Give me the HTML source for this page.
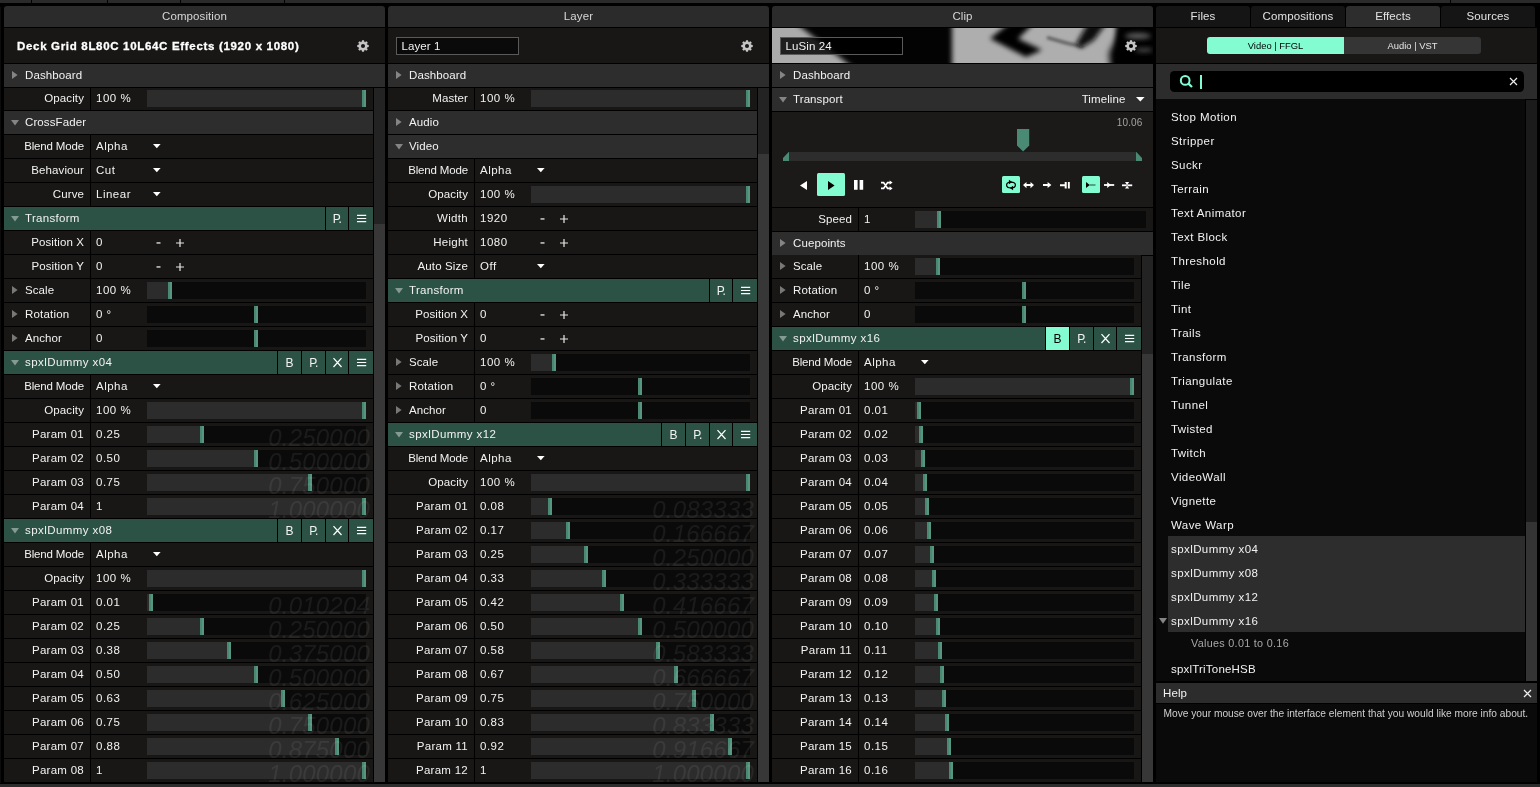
<!DOCTYPE html>
<html><head><meta charset="utf-8"><title>UI</title><style>
*{box-sizing:border-box;margin:0;padding:0}
html,body{width:1540px;height:787px;overflow:hidden;background:#000}
body{position:relative;font-family:"Liberation Sans",sans-serif;font-size:11.5px;color:#f2f2f2;letter-spacing:.1px}
.a,.r,.r>*,.p>*,.bt>*{position:absolute}
.p{position:absolute;top:0;height:787px;width:381px;will-change:transform}
.hd{left:0;top:6px;width:381px;height:21px;background:#2b2b2b;border-radius:3px 3px 0 0;text-align:center;line-height:20px;color:#d6d6d6}
.tt{left:0;top:28px;width:381px;height:35px;background:#181715}
.r{left:0;height:23px;line-height:22px;background:#181715;overflow:hidden;white-space:nowrap}
.s{background:#2d2d2d}
.t{background:#2b5245}
.lb{left:0;top:0;width:80px;text-align:right}
.ll{left:21px;top:0}
.sp{left:86px;top:0;width:1px;height:23px;background:#000}
.v{left:92px;top:0;letter-spacing:.5px}
.sl{left:143px;top:3px;height:17px;background:#0a0a0a}
.sl i{position:absolute;left:0;top:0;height:17px;background:#2c2c2c}
.sl b{position:absolute;top:0;width:4px;height:17px;background:linear-gradient(90deg,#4a8872 0,#4a8872 50%,#569680 50%)}
.g{right:3px;top:1px;font-style:italic;font-size:24px;line-height:28px;color:rgba(255,255,255,.07);letter-spacing:.2px}
.bt{top:0;height:23px;background:#2b5245;text-align:center;font-size:12px;line-height:24px}
.on{background:#83fcd2;color:#000}
svg{position:absolute;overflow:visible}
.sb{background:#232323}
.th{background:#373737}
.li{left:15px;height:24px;line-height:23px;white-space:nowrap;letter-spacing:.42px}
</style></head><body>
<div class="a" style="left:0;top:0;width:1540px;height:3px;background:#2a2a2a"></div>
<div class="a" style="left:31px;top:0;width:1px;height:3px;background:#000"></div>
<div class="a" style="left:107px;top:0;width:1px;height:3px;background:#000"></div>
<div class="a" style="left:180px;top:0;width:1px;height:3px;background:#000"></div>
<div class="a" style="left:284px;top:0;width:1px;height:3px;background:#000"></div>
<div class="a" style="left:1450px;top:0;width:1px;height:3px;background:#000"></div>
<div class="a" style="left:0;top:784px;width:1540px;height:3px;background:#2d2d2d"></div>
<div class="a" style="left:0;top:7px;width:1px;height:776px;background:#0c0c0c"></div>
<div class="p" style="left:4px"><div class="hd">Composition</div>
<div class="tt"><span class="a" style="left:13px;top:0;line-height:36.5px;font-weight:bold;letter-spacing:.68px;-webkit-text-stroke:.3px #fff;white-space:nowrap;color:#fff">Deck Grid 8L80C 10L64C Effects (1920 x 1080)</span><svg style="left:353.1px;top:12.4px" width="12" height="12" viewBox="-6 -6 12 12"><g fill="#c6c6c6"><path d="M-1.5 -3.9L-.95 -5.75H.95L1.5 -3.9Z" transform="rotate(0)"/><path d="M-1.5 -3.9L-.95 -5.75H.95L1.5 -3.9Z" transform="rotate(45)"/><path d="M-1.5 -3.9L-.95 -5.75H.95L1.5 -3.9Z" transform="rotate(90)"/><path d="M-1.5 -3.9L-.95 -5.75H.95L1.5 -3.9Z" transform="rotate(135)"/><path d="M-1.5 -3.9L-.95 -5.75H.95L1.5 -3.9Z" transform="rotate(180)"/><path d="M-1.5 -3.9L-.95 -5.75H.95L1.5 -3.9Z" transform="rotate(225)"/><path d="M-1.5 -3.9L-.95 -5.75H.95L1.5 -3.9Z" transform="rotate(270)"/><path d="M-1.5 -3.9L-.95 -5.75H.95L1.5 -3.9Z" transform="rotate(315)"/></g><circle r="3.2" fill="none" stroke="#c6c6c6" stroke-width="2.3"/></svg></div>
<div class="r s" style="top:64px;width:381px"><svg style="left:8px;top:6.9px" width="6" height="8"><path d="M0 0L5.6 4L0 8Z" fill="rgba(255,255,255,.42)"/></svg><span class="ll">Dashboard</span></div>
<div class="r " style="top:87px;width:369px"><span class="lb">Opacity</span><span class="sp"></span><span class="v">100 %</span><div class="sl" style="width:219px"><i style="width:215px"></i><b style="left:215px"></b></div></div>
<div class="a" style="left:0;top:87px;width:381px;height:1px;background:#000"></div>
<div class="r s" style="top:111px;width:369px"><svg style="left:7px;top:9px" width="8" height="5.5"><path d="M0 0H8L4.0 5.5Z" fill="rgba(255,255,255,.42)"/></svg><span class="ll">CrossFader</span></div>
<div class="r " style="top:135px;width:369px"><span class="lb" style="letter-spacing:-0.15px">Blend Mode</span><span class="sp"></span><span class="v">Alpha</span><svg style="left:148.5px;top:9px" width="7.6" height="4.3"><path d="M0 0H7.6L3.8 4.3Z" fill="#fff"/></svg></div>
<div class="r " style="top:159px;width:369px"><span class="lb">Behaviour</span><span class="sp"></span><span class="v">Cut</span><svg style="left:148.5px;top:9px" width="7.6" height="4.3"><path d="M0 0H7.6L3.8 4.3Z" fill="#fff"/></svg></div>
<div class="r " style="top:183px;width:369px"><span class="lb">Curve</span><span class="sp"></span><span class="v">Linear</span><svg style="left:148.5px;top:9px" width="7.6" height="4.3"><path d="M0 0H7.6L3.8 4.3Z" fill="#fff"/></svg></div>
<div class="r" style="top:207px;width:369px;background:#000"><div class="bt" style="left:0;width:321px;text-align:left"><svg style="left:7px;top:9px" width="8" height="5.5"><path d="M0 0H8L4.0 5.5Z" fill="rgba(255,255,255,.42)"/></svg><span class="ll" style="font-size:11.5px;line-height:22px;letter-spacing:0.3px">Transform</span></div><div class="bt" style="left:322px;width:22px"><span style="left:6.8px;top:0;letter-spacing:-.7px;line-height:24px">P.</span></div><div class="bt" style="left:345px;width:24px"><svg style="left:7.5px;top:7px" width="9" height="9"><path d="M0 1.3H9.2M0 4.5H9.2M0 7.6H9.2" stroke="#fff" stroke-width="1.15" fill="none"/></svg></div></div>
<div class="r " style="top:231px;width:369px"><span class="lb">Position X</span><span class="sp"></span><span class="v">0</span><svg style="left:152px;top:11px" width="5" height="2"><rect width="4" height="1.3" x=".5" y=".3" fill="#e8e8e8"/></svg><svg style="left:172px;top:8px" width="8" height="8"><path d="M0 4H8M4 0V8" stroke="#e8e8e8" stroke-width="1.2" fill="none"/></svg></div>
<div class="r " style="top:255px;width:369px"><span class="lb">Position Y</span><span class="sp"></span><span class="v">0</span><svg style="left:152px;top:11px" width="5" height="2"><rect width="4" height="1.3" x=".5" y=".3" fill="#e8e8e8"/></svg><svg style="left:172px;top:8px" width="8" height="8"><path d="M0 4H8M4 0V8" stroke="#e8e8e8" stroke-width="1.2" fill="none"/></svg></div>
<div class="r " style="top:279px;width:369px"><svg style="left:8px;top:6.9px" width="6" height="8"><path d="M0 0L5.6 4L0 8Z" fill="rgba(255,255,255,.42)"/></svg><span class="ll">Scale</span><span class="sp"></span><span class="v">100 %</span><div class="sl" style="width:219px"><i style="width:21px"></i><b style="left:21px"></b></div></div>
<div class="r " style="top:303px;width:369px"><svg style="left:8px;top:6.9px" width="6" height="8"><path d="M0 0L5.6 4L0 8Z" fill="rgba(255,255,255,.42)"/></svg><span class="ll" style="letter-spacing:0.2px">Rotation</span><span class="sp"></span><span class="v">0 °</span><div class="sl" style="width:219px"><b style="left:107px"></b></div></div>
<div class="r " style="top:327px;width:369px"><svg style="left:8px;top:6.9px" width="6" height="8"><path d="M0 0L5.6 4L0 8Z" fill="rgba(255,255,255,.42)"/></svg><span class="ll">Anchor</span><span class="sp"></span><span class="v">0</span><div class="sl" style="width:219px"><b style="left:107px"></b></div></div>
<div class="r" style="top:351px;width:369px;background:#000"><div class="bt" style="left:0;width:273px;text-align:left"><svg style="left:7px;top:9px" width="8" height="5.5"><path d="M0 0H8L4.0 5.5Z" fill="rgba(255,255,255,.42)"/></svg><span class="ll" style="font-size:11.5px;line-height:22px;letter-spacing:0.43px">spxlDummy x04</span></div><div class="bt" style="left:274px;width:23px">B</div><div class="bt" style="left:298px;width:23px"><span style="left:7.3px;top:0;letter-spacing:-.7px;line-height:24px">P.</span></div><div class="bt" style="left:322px;width:22px"><svg style="left:6.8px;top:7px" width="9" height="9"><path d="M.5 .1L8.5 9M8.5 .1L.5 9" stroke="#fff" stroke-width="1.25" fill="none"/></svg></div><div class="bt" style="left:345px;width:24px"><svg style="left:7.5px;top:7px" width="9" height="9"><path d="M0 1.3H9.2M0 4.5H9.2M0 7.6H9.2" stroke="#fff" stroke-width="1.15" fill="none"/></svg></div></div>
<div class="r " style="top:375px;width:369px"><span class="lb" style="letter-spacing:-0.15px">Blend Mode</span><span class="sp"></span><span class="v">Alpha</span><svg style="left:148.5px;top:9px" width="7.6" height="4.3"><path d="M0 0H7.6L3.8 4.3Z" fill="#fff"/></svg></div>
<div class="r " style="top:399px;width:369px"><span class="lb">Opacity</span><span class="sp"></span><span class="v">100 %</span><div class="sl" style="width:219px"><i style="width:215px"></i><b style="left:215px"></b></div></div>
<div class="r " style="top:423px;width:369px"><span class="lb" style="letter-spacing:0.27px">Param 01</span><span class="sp"></span><span class="v">0.25</span><div class="sl" style="width:219px"><i style="width:53px"></i><b style="left:53px"></b></div><span class="g">0.250000</span></div>
<div class="r " style="top:447px;width:369px"><span class="lb" style="letter-spacing:0.27px">Param 02</span><span class="sp"></span><span class="v">0.50</span><div class="sl" style="width:219px"><i style="width:107px"></i><b style="left:107px"></b></div><span class="g">0.500000</span></div>
<div class="r " style="top:471px;width:369px"><span class="lb" style="letter-spacing:0.27px">Param 03</span><span class="sp"></span><span class="v">0.75</span><div class="sl" style="width:219px"><i style="width:161px"></i><b style="left:161px"></b></div><span class="g">0.750000</span></div>
<div class="r " style="top:495px;width:369px"><span class="lb" style="letter-spacing:0.27px">Param 04</span><span class="sp"></span><span class="v">1</span><div class="sl" style="width:219px"><i style="width:215px"></i><b style="left:215px"></b></div><span class="g">1.000000</span></div>
<div class="r" style="top:519px;width:369px;background:#000"><div class="bt" style="left:0;width:273px;text-align:left"><svg style="left:7px;top:9px" width="8" height="5.5"><path d="M0 0H8L4.0 5.5Z" fill="rgba(255,255,255,.42)"/></svg><span class="ll" style="font-size:11.5px;line-height:22px;letter-spacing:0.43px">spxlDummy x08</span></div><div class="bt" style="left:274px;width:23px">B</div><div class="bt" style="left:298px;width:23px"><span style="left:7.3px;top:0;letter-spacing:-.7px;line-height:24px">P.</span></div><div class="bt" style="left:322px;width:22px"><svg style="left:6.8px;top:7px" width="9" height="9"><path d="M.5 .1L8.5 9M8.5 .1L.5 9" stroke="#fff" stroke-width="1.25" fill="none"/></svg></div><div class="bt" style="left:345px;width:24px"><svg style="left:7.5px;top:7px" width="9" height="9"><path d="M0 1.3H9.2M0 4.5H9.2M0 7.6H9.2" stroke="#fff" stroke-width="1.15" fill="none"/></svg></div></div>
<div class="r " style="top:543px;width:369px"><span class="lb" style="letter-spacing:-0.15px">Blend Mode</span><span class="sp"></span><span class="v">Alpha</span><svg style="left:148.5px;top:9px" width="7.6" height="4.3"><path d="M0 0H7.6L3.8 4.3Z" fill="#fff"/></svg></div>
<div class="r " style="top:567px;width:369px"><span class="lb">Opacity</span><span class="sp"></span><span class="v">100 %</span><div class="sl" style="width:219px"><i style="width:215px"></i><b style="left:215px"></b></div></div>
<div class="r " style="top:591px;width:369px"><span class="lb" style="letter-spacing:0.27px">Param 01</span><span class="sp"></span><span class="v">0.01</span><div class="sl" style="width:219px"><i style="width:2px"></i><b style="left:2px"></b></div><span class="g">0.010204</span></div>
<div class="r " style="top:615px;width:369px"><span class="lb" style="letter-spacing:0.27px">Param 02</span><span class="sp"></span><span class="v">0.25</span><div class="sl" style="width:219px"><i style="width:53px"></i><b style="left:53px"></b></div><span class="g">0.250000</span></div>
<div class="r " style="top:639px;width:369px"><span class="lb" style="letter-spacing:0.27px">Param 03</span><span class="sp"></span><span class="v">0.38</span><div class="sl" style="width:219px"><i style="width:80px"></i><b style="left:80px"></b></div><span class="g">0.375000</span></div>
<div class="r " style="top:663px;width:369px"><span class="lb" style="letter-spacing:0.27px">Param 04</span><span class="sp"></span><span class="v">0.50</span><div class="sl" style="width:219px"><i style="width:107px"></i><b style="left:107px"></b></div><span class="g">0.500000</span></div>
<div class="r " style="top:687px;width:369px"><span class="lb" style="letter-spacing:0.27px">Param 05</span><span class="sp"></span><span class="v">0.63</span><div class="sl" style="width:219px"><i style="width:134px"></i><b style="left:134px"></b></div><span class="g">0.625000</span></div>
<div class="r " style="top:711px;width:369px"><span class="lb" style="letter-spacing:0.27px">Param 06</span><span class="sp"></span><span class="v">0.75</span><div class="sl" style="width:219px"><i style="width:161px"></i><b style="left:161px"></b></div><span class="g">0.750000</span></div>
<div class="r " style="top:735px;width:369px"><span class="lb" style="letter-spacing:0.27px">Param 07</span><span class="sp"></span><span class="v">0.88</span><div class="sl" style="width:219px"><i style="width:188px"></i><b style="left:188px"></b></div><span class="g">0.875000</span></div>
<div class="r " style="top:759px;width:369px"><span class="lb" style="letter-spacing:0.27px">Param 08</span><span class="sp"></span><span class="v">1</span><div class="sl" style="width:219px"><i style="width:215px"></i><b style="left:215px"></b></div><span class="g">1.000000</span></div>
<div class="a sb" style="left:370px;top:88px;width:11px;height:694px"></div><div class="a th" style="left:370px;top:224px;width:11px;height:558px"></div></div>
<div class="p" style="left:388px"><div class="hd">Layer</div>
<div class="tt"><div class="a" style="left:8px;top:9px;width:123px;height:18px;border:1px solid #5a5a5a;background:#0a0a0a;line-height:17px;padding-left:4.5px;white-space:nowrap">Layer 1</div><svg style="left:353.1px;top:12.4px" width="12" height="12" viewBox="-6 -6 12 12"><g fill="#c6c6c6"><path d="M-1.5 -3.9L-.95 -5.75H.95L1.5 -3.9Z" transform="rotate(0)"/><path d="M-1.5 -3.9L-.95 -5.75H.95L1.5 -3.9Z" transform="rotate(45)"/><path d="M-1.5 -3.9L-.95 -5.75H.95L1.5 -3.9Z" transform="rotate(90)"/><path d="M-1.5 -3.9L-.95 -5.75H.95L1.5 -3.9Z" transform="rotate(135)"/><path d="M-1.5 -3.9L-.95 -5.75H.95L1.5 -3.9Z" transform="rotate(180)"/><path d="M-1.5 -3.9L-.95 -5.75H.95L1.5 -3.9Z" transform="rotate(225)"/><path d="M-1.5 -3.9L-.95 -5.75H.95L1.5 -3.9Z" transform="rotate(270)"/><path d="M-1.5 -3.9L-.95 -5.75H.95L1.5 -3.9Z" transform="rotate(315)"/></g><circle r="3.2" fill="none" stroke="#c6c6c6" stroke-width="2.3"/></svg></div>
<div class="r s" style="top:64px;width:381px"><svg style="left:8px;top:6.9px" width="6" height="8"><path d="M0 0L5.6 4L0 8Z" fill="rgba(255,255,255,.42)"/></svg><span class="ll">Dashboard</span></div>
<div class="r " style="top:87px;width:369px"><span class="lb">Master</span><span class="sp"></span><span class="v">100 %</span><div class="sl" style="width:219px"><i style="width:215px"></i><b style="left:215px"></b></div></div>
<div class="a" style="left:0;top:87px;width:381px;height:1px;background:#000"></div>
<div class="r s" style="top:111px;width:369px"><svg style="left:8px;top:6.9px" width="6" height="8"><path d="M0 0L5.6 4L0 8Z" fill="rgba(255,255,255,.42)"/></svg><span class="ll">Audio</span></div>
<div class="r s" style="top:135px;width:369px"><svg style="left:7px;top:9px" width="8" height="5.5"><path d="M0 0H8L4.0 5.5Z" fill="rgba(255,255,255,.42)"/></svg><span class="ll">Video</span></div>
<div class="r " style="top:159px;width:369px"><span class="lb" style="letter-spacing:-0.15px">Blend Mode</span><span class="sp"></span><span class="v">Alpha</span><svg style="left:148.5px;top:9px" width="7.6" height="4.3"><path d="M0 0H7.6L3.8 4.3Z" fill="#fff"/></svg></div>
<div class="r " style="top:183px;width:369px"><span class="lb">Opacity</span><span class="sp"></span><span class="v">100 %</span><div class="sl" style="width:219px"><i style="width:215px"></i><b style="left:215px"></b></div></div>
<div class="r " style="top:207px;width:369px"><span class="lb" style="letter-spacing:0.3px">Width</span><span class="sp"></span><span class="v">1920</span><svg style="left:152px;top:11px" width="5" height="2"><rect width="4" height="1.3" x=".5" y=".3" fill="#e8e8e8"/></svg><svg style="left:172px;top:8px" width="8" height="8"><path d="M0 4H8M4 0V8" stroke="#e8e8e8" stroke-width="1.2" fill="none"/></svg></div>
<div class="r " style="top:231px;width:369px"><span class="lb" style="letter-spacing:0.25px">Height</span><span class="sp"></span><span class="v">1080</span><svg style="left:152px;top:11px" width="5" height="2"><rect width="4" height="1.3" x=".5" y=".3" fill="#e8e8e8"/></svg><svg style="left:172px;top:8px" width="8" height="8"><path d="M0 4H8M4 0V8" stroke="#e8e8e8" stroke-width="1.2" fill="none"/></svg></div>
<div class="r " style="top:255px;width:369px"><span class="lb" style="letter-spacing:0.15px">Auto Size</span><span class="sp"></span><span class="v">Off</span><svg style="left:148.5px;top:9px" width="7.6" height="4.3"><path d="M0 0H7.6L3.8 4.3Z" fill="#fff"/></svg></div>
<div class="r" style="top:279px;width:369px;background:#000"><div class="bt" style="left:0;width:321px;text-align:left"><svg style="left:7px;top:9px" width="8" height="5.5"><path d="M0 0H8L4.0 5.5Z" fill="rgba(255,255,255,.42)"/></svg><span class="ll" style="font-size:11.5px;line-height:22px;letter-spacing:0.3px">Transform</span></div><div class="bt" style="left:322px;width:22px"><span style="left:6.8px;top:0;letter-spacing:-.7px;line-height:24px">P.</span></div><div class="bt" style="left:345px;width:24px"><svg style="left:7.5px;top:7px" width="9" height="9"><path d="M0 1.3H9.2M0 4.5H9.2M0 7.6H9.2" stroke="#fff" stroke-width="1.15" fill="none"/></svg></div></div>
<div class="r " style="top:303px;width:369px"><span class="lb">Position X</span><span class="sp"></span><span class="v">0</span><svg style="left:152px;top:11px" width="5" height="2"><rect width="4" height="1.3" x=".5" y=".3" fill="#e8e8e8"/></svg><svg style="left:172px;top:8px" width="8" height="8"><path d="M0 4H8M4 0V8" stroke="#e8e8e8" stroke-width="1.2" fill="none"/></svg></div>
<div class="r " style="top:327px;width:369px"><span class="lb">Position Y</span><span class="sp"></span><span class="v">0</span><svg style="left:152px;top:11px" width="5" height="2"><rect width="4" height="1.3" x=".5" y=".3" fill="#e8e8e8"/></svg><svg style="left:172px;top:8px" width="8" height="8"><path d="M0 4H8M4 0V8" stroke="#e8e8e8" stroke-width="1.2" fill="none"/></svg></div>
<div class="r " style="top:351px;width:369px"><svg style="left:8px;top:6.9px" width="6" height="8"><path d="M0 0L5.6 4L0 8Z" fill="rgba(255,255,255,.42)"/></svg><span class="ll">Scale</span><span class="sp"></span><span class="v">100 %</span><div class="sl" style="width:219px"><i style="width:21px"></i><b style="left:21px"></b></div></div>
<div class="r " style="top:375px;width:369px"><svg style="left:8px;top:6.9px" width="6" height="8"><path d="M0 0L5.6 4L0 8Z" fill="rgba(255,255,255,.42)"/></svg><span class="ll" style="letter-spacing:0.2px">Rotation</span><span class="sp"></span><span class="v">0 °</span><div class="sl" style="width:219px"><b style="left:107px"></b></div></div>
<div class="r " style="top:399px;width:369px"><svg style="left:8px;top:6.9px" width="6" height="8"><path d="M0 0L5.6 4L0 8Z" fill="rgba(255,255,255,.42)"/></svg><span class="ll">Anchor</span><span class="sp"></span><span class="v">0</span><div class="sl" style="width:219px"><b style="left:107px"></b></div></div>
<div class="r" style="top:423px;width:369px;background:#000"><div class="bt" style="left:0;width:273px;text-align:left"><svg style="left:7px;top:9px" width="8" height="5.5"><path d="M0 0H8L4.0 5.5Z" fill="rgba(255,255,255,.42)"/></svg><span class="ll" style="font-size:11.5px;line-height:22px;letter-spacing:0.43px">spxlDummy x12</span></div><div class="bt" style="left:274px;width:23px">B</div><div class="bt" style="left:298px;width:23px"><span style="left:7.3px;top:0;letter-spacing:-.7px;line-height:24px">P.</span></div><div class="bt" style="left:322px;width:22px"><svg style="left:6.8px;top:7px" width="9" height="9"><path d="M.5 .1L8.5 9M8.5 .1L.5 9" stroke="#fff" stroke-width="1.25" fill="none"/></svg></div><div class="bt" style="left:345px;width:24px"><svg style="left:7.5px;top:7px" width="9" height="9"><path d="M0 1.3H9.2M0 4.5H9.2M0 7.6H9.2" stroke="#fff" stroke-width="1.15" fill="none"/></svg></div></div>
<div class="r " style="top:447px;width:369px"><span class="lb" style="letter-spacing:-0.15px">Blend Mode</span><span class="sp"></span><span class="v">Alpha</span><svg style="left:148.5px;top:9px" width="7.6" height="4.3"><path d="M0 0H7.6L3.8 4.3Z" fill="#fff"/></svg></div>
<div class="r " style="top:471px;width:369px"><span class="lb">Opacity</span><span class="sp"></span><span class="v">100 %</span><div class="sl" style="width:219px"><i style="width:215px"></i><b style="left:215px"></b></div></div>
<div class="r " style="top:495px;width:369px"><span class="lb" style="letter-spacing:0.27px">Param 01</span><span class="sp"></span><span class="v">0.08</span><div class="sl" style="width:219px"><i style="width:17px"></i><b style="left:17px"></b></div><span class="g">0.083333</span></div>
<div class="r " style="top:519px;width:369px"><span class="lb" style="letter-spacing:0.27px">Param 02</span><span class="sp"></span><span class="v">0.17</span><div class="sl" style="width:219px"><i style="width:35px"></i><b style="left:35px"></b></div><span class="g">0.166667</span></div>
<div class="r " style="top:543px;width:369px"><span class="lb" style="letter-spacing:0.27px">Param 03</span><span class="sp"></span><span class="v">0.25</span><div class="sl" style="width:219px"><i style="width:53px"></i><b style="left:53px"></b></div><span class="g">0.250000</span></div>
<div class="r " style="top:567px;width:369px"><span class="lb" style="letter-spacing:0.27px">Param 04</span><span class="sp"></span><span class="v">0.33</span><div class="sl" style="width:219px"><i style="width:71px"></i><b style="left:71px"></b></div><span class="g">0.333333</span></div>
<div class="r " style="top:591px;width:369px"><span class="lb" style="letter-spacing:0.27px">Param 05</span><span class="sp"></span><span class="v">0.42</span><div class="sl" style="width:219px"><i style="width:89px"></i><b style="left:89px"></b></div><span class="g">0.416667</span></div>
<div class="r " style="top:615px;width:369px"><span class="lb" style="letter-spacing:0.27px">Param 06</span><span class="sp"></span><span class="v">0.50</span><div class="sl" style="width:219px"><i style="width:107px"></i><b style="left:107px"></b></div><span class="g">0.500000</span></div>
<div class="r " style="top:639px;width:369px"><span class="lb" style="letter-spacing:0.27px">Param 07</span><span class="sp"></span><span class="v">0.58</span><div class="sl" style="width:219px"><i style="width:125px"></i><b style="left:125px"></b></div><span class="g">0.583333</span></div>
<div class="r " style="top:663px;width:369px"><span class="lb" style="letter-spacing:0.27px">Param 08</span><span class="sp"></span><span class="v">0.67</span><div class="sl" style="width:219px"><i style="width:143px"></i><b style="left:143px"></b></div><span class="g">0.666667</span></div>
<div class="r " style="top:687px;width:369px"><span class="lb" style="letter-spacing:0.27px">Param 09</span><span class="sp"></span><span class="v">0.75</span><div class="sl" style="width:219px"><i style="width:161px"></i><b style="left:161px"></b></div><span class="g">0.750000</span></div>
<div class="r " style="top:711px;width:369px"><span class="lb" style="letter-spacing:0.27px">Param 10</span><span class="sp"></span><span class="v">0.83</span><div class="sl" style="width:219px"><i style="width:179px"></i><b style="left:179px"></b></div><span class="g">0.833333</span></div>
<div class="r " style="top:735px;width:369px"><span class="lb" style="letter-spacing:0.27px">Param 11</span><span class="sp"></span><span class="v">0.92</span><div class="sl" style="width:219px"><i style="width:197px"></i><b style="left:197px"></b></div><span class="g">0.916667</span></div>
<div class="r " style="top:759px;width:369px"><span class="lb" style="letter-spacing:0.27px">Param 12</span><span class="sp"></span><span class="v">1</span><div class="sl" style="width:219px"><i style="width:215px"></i><b style="left:215px"></b></div><span class="g">1.000000</span></div>
<div class="a sb" style="left:370px;top:88px;width:11px;height:694px"></div><div class="a th" style="left:370px;top:154px;width:11px;height:628px"></div></div>
<div class="p" style="left:772px"><div class="hd">Clip</div>
<div class="tt" style="background:#000;overflow:hidden"><svg style="left:0;top:0" width="381" height="35" viewBox="0 1 381 35"><defs><filter id="b2" x="-20%" y="-80%" width="140%" height="260%"><feGaussianBlur stdDeviation="2.6"/></filter><filter id="b1" x="-20%" y="-80%" width="140%" height="260%"><feGaussianBlur stdDeviation="1.6"/></filter><filter id="b3" x="-20%" y="-80%" width="140%" height="260%"><feGaussianBlur stdDeviation="3.2"/></filter><clipPath id="tc"><rect x="0" y="1" width="381" height="35"/></clipPath></defs><g clip-path="url(#tc)"><rect x="0" y="1" width="381" height="35" fill="#030303"/><path d="M-8 -8H18.4L88 46H-8Z" fill="#ababab" filter="url(#b2)"/><rect x="180" y="-8" width="164" height="52" fill="#aeaeae" filter="url(#b2)"/><path d="M218 11.6L240 -6H264L246 11.8L270 23L254 30Z" fill="#000" filter="url(#b2)"/><path d="M275 10.5L296 16.5L311 19.5" stroke="#5a5a5a" stroke-width="3" fill="none" filter="url(#b1)"/><path d="M317 -6H336L322 13L309 21L304 17Z" fill="#0c0c0c" filter="url(#b2)"/><path d="M339 46L337 26L354 -8H392V46Z" fill="#040404" filter="url(#b3)"/><ellipse cx="366" cy="9" rx="13" ry="3" fill="#606060" filter="url(#b2)"/><ellipse cx="372" cy="23" rx="9" ry="2" fill="#505050" filter="url(#b2)"/></g></svg>
<div class="a" style="left:8px;top:9px;width:123px;height:18px;border:1px solid #5a5a5a;background:rgba(0,0,0,.82);line-height:17px;padding-left:4.5px;white-space:nowrap">LuSin 24</div><svg style="left:353.1px;top:12.4px" width="12" height="12" viewBox="-6 -6 12 12"><g fill="#c6c6c6"><path d="M-1.5 -3.9L-.95 -5.75H.95L1.5 -3.9Z" transform="rotate(0)"/><path d="M-1.5 -3.9L-.95 -5.75H.95L1.5 -3.9Z" transform="rotate(45)"/><path d="M-1.5 -3.9L-.95 -5.75H.95L1.5 -3.9Z" transform="rotate(90)"/><path d="M-1.5 -3.9L-.95 -5.75H.95L1.5 -3.9Z" transform="rotate(135)"/><path d="M-1.5 -3.9L-.95 -5.75H.95L1.5 -3.9Z" transform="rotate(180)"/><path d="M-1.5 -3.9L-.95 -5.75H.95L1.5 -3.9Z" transform="rotate(225)"/><path d="M-1.5 -3.9L-.95 -5.75H.95L1.5 -3.9Z" transform="rotate(270)"/><path d="M-1.5 -3.9L-.95 -5.75H.95L1.5 -3.9Z" transform="rotate(315)"/></g><circle r="3.2" fill="none" stroke="#c6c6c6" stroke-width="2.3"/></svg></div>
<div class="r s" style="top:64px;width:381px"><svg style="left:8px;top:6.9px" width="6" height="8"><path d="M0 0L5.6 4L0 8Z" fill="rgba(255,255,255,.42)"/></svg><span class="ll">Dashboard</span></div>
<div class="r s" style="top:88px;width:381px"><svg style="left:7px;top:9px" width="8" height="5.5"><path d="M0 0H8L4.0 5.5Z" fill="rgba(255,255,255,.42)"/></svg><span class="ll">Transport</span><span class="a" style="right:27.5px;top:0">Timeline</span><svg style="left:363.5px;top:9px" width="8.6" height="4.4"><path d="M0 0H8.6L4.3 4.4Z" fill="#fff"/></svg></div>
<div class="a" style="left:0;top:112px;width:381px;height:95px;background:#1c1a19"></div>
<span class="a" style="right:10.5px;top:116.5px;font-size:10px;line-height:12px;color:#a3a3a3;letter-spacing:.15px">10.06</span>
<div class="a" style="left:17px;top:152px;width:347px;height:9px;background:#2d2d2d"></div>
<svg style="left:11px;top:152px" width="6" height="9"><path d="M0 9V6L5.6 0H6V9Z" fill="#4a8a74"/></svg>
<svg style="left:364px;top:152px" width="6" height="9"><path d="M0 0H.4L6 6V9H0Z" fill="#4a8a74"/></svg>
<svg style="left:245.4px;top:129px" width="13" height="23"><path d="M0 0H12.2V16.5L6.1 22.5L0 16.5Z" fill="#4a8a74"/></svg>
<svg style="left:28px;top:180.5px" width="7" height="9"><path d="M7 0L0 4.5L7 9Z" fill="#fff"/></svg>
<div class="a" style="left:45px;top:173px;width:28px;height:23px;background:#83fcd2;border-radius:1.5px"></div>
<svg style="left:56px;top:180.5px" width="7" height="9"><path d="M0 0L6.6 4.5L0 9Z" fill="#000"/></svg>
<svg style="left:82.3px;top:180px" width="10" height="10"><path d="M0 0H3.6V9.7H0ZM5.6 0H9.2V9.7H5.6Z" fill="#fff"/></svg>
<svg style="left:109px;top:180.5px" width="12" height="9" fill="none" stroke="#fff" stroke-width="1.7"><path d="M0 1.6H2.6L6.6 7.4H9M0 7.4H2.6L6.6 1.6H9"/><path d="M8.6 -.6L11.6 1.6L8.6 3.8ZM8.6 5.2L11.6 7.4L8.6 9.6Z" fill="#fff" stroke="none"/></svg>
<div class="a" style="left:230px;top:176px;width:18px;height:17px;background:#83fcd2;border-radius:1.5px"></div>
<svg style="left:234px;top:180px" width="10" height="10" fill="none" stroke="#000" stroke-width="1.25"><ellipse cx="5" cy="5" rx="4.4" ry="2.9"/><path d="M2.9 -.2L6.2 2L2.9 4.2ZM7.1 5.8L3.8 8L7.1 10.2Z" fill="#000" stroke="none"/></svg>
<svg style="left:251.2px;top:181.9px" width="11" height="7"><path d="M0 3.1L3.5 0V2.1H7.5V0L11 3.1L7.5 6.2V4.1H3.5V6.2Z" fill="#fff"/></svg>
<svg style="left:270.8px;top:182px" width="9" height="6"><path d="M0 2.1H4.6V0L8.4 3L4.6 6V3.9H0Z" fill="#fff"/></svg>
<svg style="left:288.2px;top:181.7px" width="10" height="7"><path d="M0 2.3H4.8V4.3H0ZM4.7 0H6.7V6.6H4.7ZM7.9 0H9.8V6.6H7.9Z" fill="#fff"/></svg>
<div class="a" style="left:310px;top:176px;width:18px;height:17px;background:#83fcd2;border-radius:1.5px"></div>
<svg style="left:314px;top:182px" width="10" height="6"><path d="M0 0L3.8 3L0 6Z" fill="#000"/><path d="M3.6 2.3H9.5V3.7H3.6Z" fill="#3b7d68"/></svg>
<svg style="left:332px;top:182px" width="11" height="6"><path d="M0 2.1H10.2V3.9H0Z" fill="#fff"/><path d="M3.2 0L6.8 3L3.2 6Z" fill="#fff"/></svg>
<svg style="left:350px;top:181.8px" width="11" height="7"><path d="M0 2.4H10.2V4.2H0Z" fill="#fff"/><path d="M3 0H7.2L5.1 2.9ZM3 6.6H7.2L5.1 3.7Z" fill="#fff"/><rect x="4.3" y="2.7" width="1.6" height="1.2" fill="#999"/></svg>
<div class="r " style="top:208px;width:381px"><span class="lb">Speed</span><span class="sp"></span><span class="v">1</span><div class="sl" style="width:231px"><i style="width:22px"></i><b style="left:22px"></b></div></div>
<div class="r s" style="top:232px;width:381px"><svg style="left:8px;top:6.9px" width="6" height="8"><path d="M0 0L5.6 4L0 8Z" fill="rgba(255,255,255,.42)"/></svg><span class="ll">Cuepoints</span></div>
<div class="r " style="top:255px;width:369px"><svg style="left:8px;top:6.9px" width="6" height="8"><path d="M0 0L5.6 4L0 8Z" fill="rgba(255,255,255,.42)"/></svg><span class="ll">Scale</span><span class="sp"></span><span class="v">100 %</span><div class="sl" style="width:219px"><i style="width:21px"></i><b style="left:21px"></b></div></div>
<div class="r " style="top:279px;width:369px"><svg style="left:8px;top:6.9px" width="6" height="8"><path d="M0 0L5.6 4L0 8Z" fill="rgba(255,255,255,.42)"/></svg><span class="ll" style="letter-spacing:0.2px">Rotation</span><span class="sp"></span><span class="v">0 °</span><div class="sl" style="width:219px"><b style="left:107px"></b></div></div>
<div class="r " style="top:303px;width:369px"><svg style="left:8px;top:6.9px" width="6" height="8"><path d="M0 0L5.6 4L0 8Z" fill="rgba(255,255,255,.42)"/></svg><span class="ll">Anchor</span><span class="sp"></span><span class="v">0</span><div class="sl" style="width:219px"><b style="left:107px"></b></div></div>
<div class="r" style="top:327px;width:369px;background:#000"><div class="bt" style="left:0;width:273px;text-align:left"><svg style="left:7px;top:9px" width="8" height="5.5"><path d="M0 0H8L4.0 5.5Z" fill="rgba(255,255,255,.42)"/></svg><span class="ll" style="font-size:11.5px;line-height:22px;letter-spacing:0.43px">spxlDummy x16</span></div><div class="bt on" style="left:274px;width:23px">B</div><div class="bt" style="left:298px;width:23px"><span style="left:7.3px;top:0;letter-spacing:-.7px;line-height:24px">P.</span></div><div class="bt" style="left:322px;width:22px"><svg style="left:6.8px;top:7px" width="9" height="9"><path d="M.5 .1L8.5 9M8.5 .1L.5 9" stroke="#fff" stroke-width="1.25" fill="none"/></svg></div><div class="bt" style="left:345px;width:24px"><svg style="left:7.5px;top:7px" width="9" height="9"><path d="M0 1.3H9.2M0 4.5H9.2M0 7.6H9.2" stroke="#fff" stroke-width="1.15" fill="none"/></svg></div></div>
<div class="r " style="top:351px;width:369px"><span class="lb" style="letter-spacing:-0.15px">Blend Mode</span><span class="sp"></span><span class="v">Alpha</span><svg style="left:148.5px;top:9px" width="7.6" height="4.3"><path d="M0 0H7.6L3.8 4.3Z" fill="#fff"/></svg></div>
<div class="r " style="top:375px;width:369px"><span class="lb">Opacity</span><span class="sp"></span><span class="v">100 %</span><div class="sl" style="width:219px"><i style="width:215px"></i><b style="left:215px"></b></div></div>
<div class="r " style="top:399px;width:369px"><span class="lb" style="letter-spacing:0.27px">Param 01</span><span class="sp"></span><span class="v">0.01</span><div class="sl" style="width:219px"><i style="width:2px"></i><b style="left:2px"></b></div></div>
<div class="r " style="top:423px;width:369px"><span class="lb" style="letter-spacing:0.27px">Param 02</span><span class="sp"></span><span class="v">0.02</span><div class="sl" style="width:219px"><i style="width:4px"></i><b style="left:4px"></b></div></div>
<div class="r " style="top:447px;width:369px"><span class="lb" style="letter-spacing:0.27px">Param 03</span><span class="sp"></span><span class="v">0.03</span><div class="sl" style="width:219px"><i style="width:6px"></i><b style="left:6px"></b></div></div>
<div class="r " style="top:471px;width:369px"><span class="lb" style="letter-spacing:0.27px">Param 04</span><span class="sp"></span><span class="v">0.04</span><div class="sl" style="width:219px"><i style="width:8px"></i><b style="left:8px"></b></div></div>
<div class="r " style="top:495px;width:369px"><span class="lb" style="letter-spacing:0.27px">Param 05</span><span class="sp"></span><span class="v">0.05</span><div class="sl" style="width:219px"><i style="width:10px"></i><b style="left:10px"></b></div></div>
<div class="r " style="top:519px;width:369px"><span class="lb" style="letter-spacing:0.27px">Param 06</span><span class="sp"></span><span class="v">0.06</span><div class="sl" style="width:219px"><i style="width:12px"></i><b style="left:12px"></b></div></div>
<div class="r " style="top:543px;width:369px"><span class="lb" style="letter-spacing:0.27px">Param 07</span><span class="sp"></span><span class="v">0.07</span><div class="sl" style="width:219px"><i style="width:15px"></i><b style="left:15px"></b></div></div>
<div class="r " style="top:567px;width:369px"><span class="lb" style="letter-spacing:0.27px">Param 08</span><span class="sp"></span><span class="v">0.08</span><div class="sl" style="width:219px"><i style="width:17px"></i><b style="left:17px"></b></div></div>
<div class="r " style="top:591px;width:369px"><span class="lb" style="letter-spacing:0.27px">Param 09</span><span class="sp"></span><span class="v">0.09</span><div class="sl" style="width:219px"><i style="width:19px"></i><b style="left:19px"></b></div></div>
<div class="r " style="top:615px;width:369px"><span class="lb" style="letter-spacing:0.27px">Param 10</span><span class="sp"></span><span class="v">0.10</span><div class="sl" style="width:219px"><i style="width:21px"></i><b style="left:21px"></b></div></div>
<div class="r " style="top:639px;width:369px"><span class="lb" style="letter-spacing:0.27px">Param 11</span><span class="sp"></span><span class="v">0.11</span><div class="sl" style="width:219px"><i style="width:23px"></i><b style="left:23px"></b></div></div>
<div class="r " style="top:663px;width:369px"><span class="lb" style="letter-spacing:0.27px">Param 12</span><span class="sp"></span><span class="v">0.12</span><div class="sl" style="width:219px"><i style="width:25px"></i><b style="left:25px"></b></div></div>
<div class="r " style="top:687px;width:369px"><span class="lb" style="letter-spacing:0.27px">Param 13</span><span class="sp"></span><span class="v">0.13</span><div class="sl" style="width:219px"><i style="width:27px"></i><b style="left:27px"></b></div></div>
<div class="r " style="top:711px;width:369px"><span class="lb" style="letter-spacing:0.27px">Param 14</span><span class="sp"></span><span class="v">0.14</span><div class="sl" style="width:219px"><i style="width:30px"></i><b style="left:30px"></b></div></div>
<div class="r " style="top:735px;width:369px"><span class="lb" style="letter-spacing:0.27px">Param 15</span><span class="sp"></span><span class="v">0.15</span><div class="sl" style="width:219px"><i style="width:32px"></i><b style="left:32px"></b></div></div>
<div class="r " style="top:759px;width:369px"><span class="lb" style="letter-spacing:0.27px">Param 16</span><span class="sp"></span><span class="v">0.16</span><div class="sl" style="width:219px"><i style="width:34px"></i><b style="left:34px"></b></div></div>
<div class="a sb" style="left:370px;top:256px;width:11px;height:526px"></div><div class="a th" style="left:370px;top:354px;width:11px;height:428px"></div></div>
<div class="p" style="left:1156px"><div class="a" style="left:0px;top:6px;width:94px;height:21px;background:#151515;border-radius:3px 3px 0 0;text-align:center;line-height:20px;color:#e2e2e2">Files</div>
<div class="a" style="left:95px;top:6px;width:94px;height:21px;background:#151515;border-radius:3px 3px 0 0;text-align:center;line-height:20px;color:#e2e2e2">Compositions</div>
<div class="a" style="left:190px;top:6px;width:94px;height:21px;background:#2d2d2d;border-radius:3px 3px 0 0;text-align:center;line-height:20px;color:#e2e2e2">Effects</div>
<div class="a" style="left:285px;top:6px;width:94px;height:21px;background:#151515;border-radius:3px 3px 0 0;text-align:center;line-height:20px;color:#e2e2e2">Sources</div>
<div class="tt"></div>
<div class="a" style="left:51px;top:37px;width:137px;height:17px;background:#83fcd2;border-radius:3px 0 0 3px;color:#000;text-align:center;font-size:9.4px;line-height:18.6px;letter-spacing:0">Video | FFGL</div>
<div class="a" style="left:188px;top:37px;width:137px;height:17px;background:#353535;border-radius:0 3px 3px 0;color:#e6e6e6;text-align:center;font-size:9.4px;line-height:18.6px;letter-spacing:0">Audio | VST</div>
<div class="a" style="left:0;top:64px;width:381px;height:35px;background:#2c2c2c"></div>
<div class="a" style="left:14px;top:71px;width:354px;height:21px;background:#000;border-radius:4.5px"></div>
<svg style="left:23px;top:74px" width="15" height="15" fill="none" stroke="#83fcd2" stroke-width="2"><circle cx="6.2" cy="6.4" r="4.35"/><path d="M9.4 9.6L13 13" stroke-width="2.3"/></svg>
<div class="a" style="left:44px;top:75px;width:2px;height:14px;background:#83fcd2"></div>
<svg style="left:354px;top:78px" width="7" height="7"><path d="M0 0L7 7M7 0L0 7" stroke="#eee" stroke-width="1.2" fill="none"/></svg>
<div class="a" style="left:0;top:99px;width:369px;height:582px;background:#0a0a0a"></div>
<div class="a" style="left:12px;top:536px;width:357px;height:96px;background:#2d2d2d"></div>
<div class="a li" style="top:106px">Stop Motion</div>
<div class="a li" style="top:130px">Stripper</div>
<div class="a li" style="top:154px">Suckr</div>
<div class="a li" style="top:178px">Terrain</div>
<div class="a li" style="top:202px">Text Animator</div>
<div class="a li" style="top:226px">Text Block</div>
<div class="a li" style="top:250px">Threshold</div>
<div class="a li" style="top:274px">Tile</div>
<div class="a li" style="top:298px">Tint</div>
<div class="a li" style="top:322px">Trails</div>
<div class="a li" style="top:346px">Transform</div>
<div class="a li" style="top:370px">Triangulate</div>
<div class="a li" style="top:394px">Tunnel</div>
<div class="a li" style="top:418px">Twisted</div>
<div class="a li" style="top:442px">Twitch</div>
<div class="a li" style="top:466px">VideoWall</div>
<div class="a li" style="top:490px">Vignette</div>
<div class="a li" style="top:514px">Wave Warp</div>
<div class="a li" style="top:538px">spxlDummy x04</div>
<div class="a li" style="top:562px">spxlDummy x08</div>
<div class="a li" style="top:586px">spxlDummy x12</div>
<div class="a li" style="top:610px">spxlDummy x16</div>
<svg style="left:2.6px;top:618px" width="8" height="5.7"><path d="M0 0H8L4.0 5.7Z" fill="rgba(255,255,255,.5)"/></svg>
<div class="a li" style="left:35px;top:632.3px;font-size:10.8px;color:#a8a8a8;line-height:22px;letter-spacing:.3px">Values 0.01 to 0.16</div>
<div class="a li" style="top:658px;letter-spacing:.2px">spxlTriToneHSB</div>
<div class="a sb" style="left:370px;top:100px;width:11px;height:581px;background:#1b1b1b"></div>
<div class="a th" style="left:370px;top:522px;width:11px;height:159px;background:#343434"></div>
<div class="a" style="left:0;top:683px;width:381px;height:20px;background:#2c2c2c;line-height:20px;padding-left:7px">Help</div>
<svg style="left:367.5px;top:690px" width="7" height="7"><path d="M0 0L7 7M7 0L0 7" stroke="#eee" stroke-width="1.25" fill="none"/></svg>
<div class="a" style="left:0;top:704px;width:381px;height:78px;background:#0a0a0a"></div>
<div class="a" style="left:7.5px;top:707px;font-size:10.2px;line-height:13px;color:#cfcfcf;white-space:nowrap;letter-spacing:0">Move your mouse over the interface element that you would like more info about.</div></div>
</body></html>
